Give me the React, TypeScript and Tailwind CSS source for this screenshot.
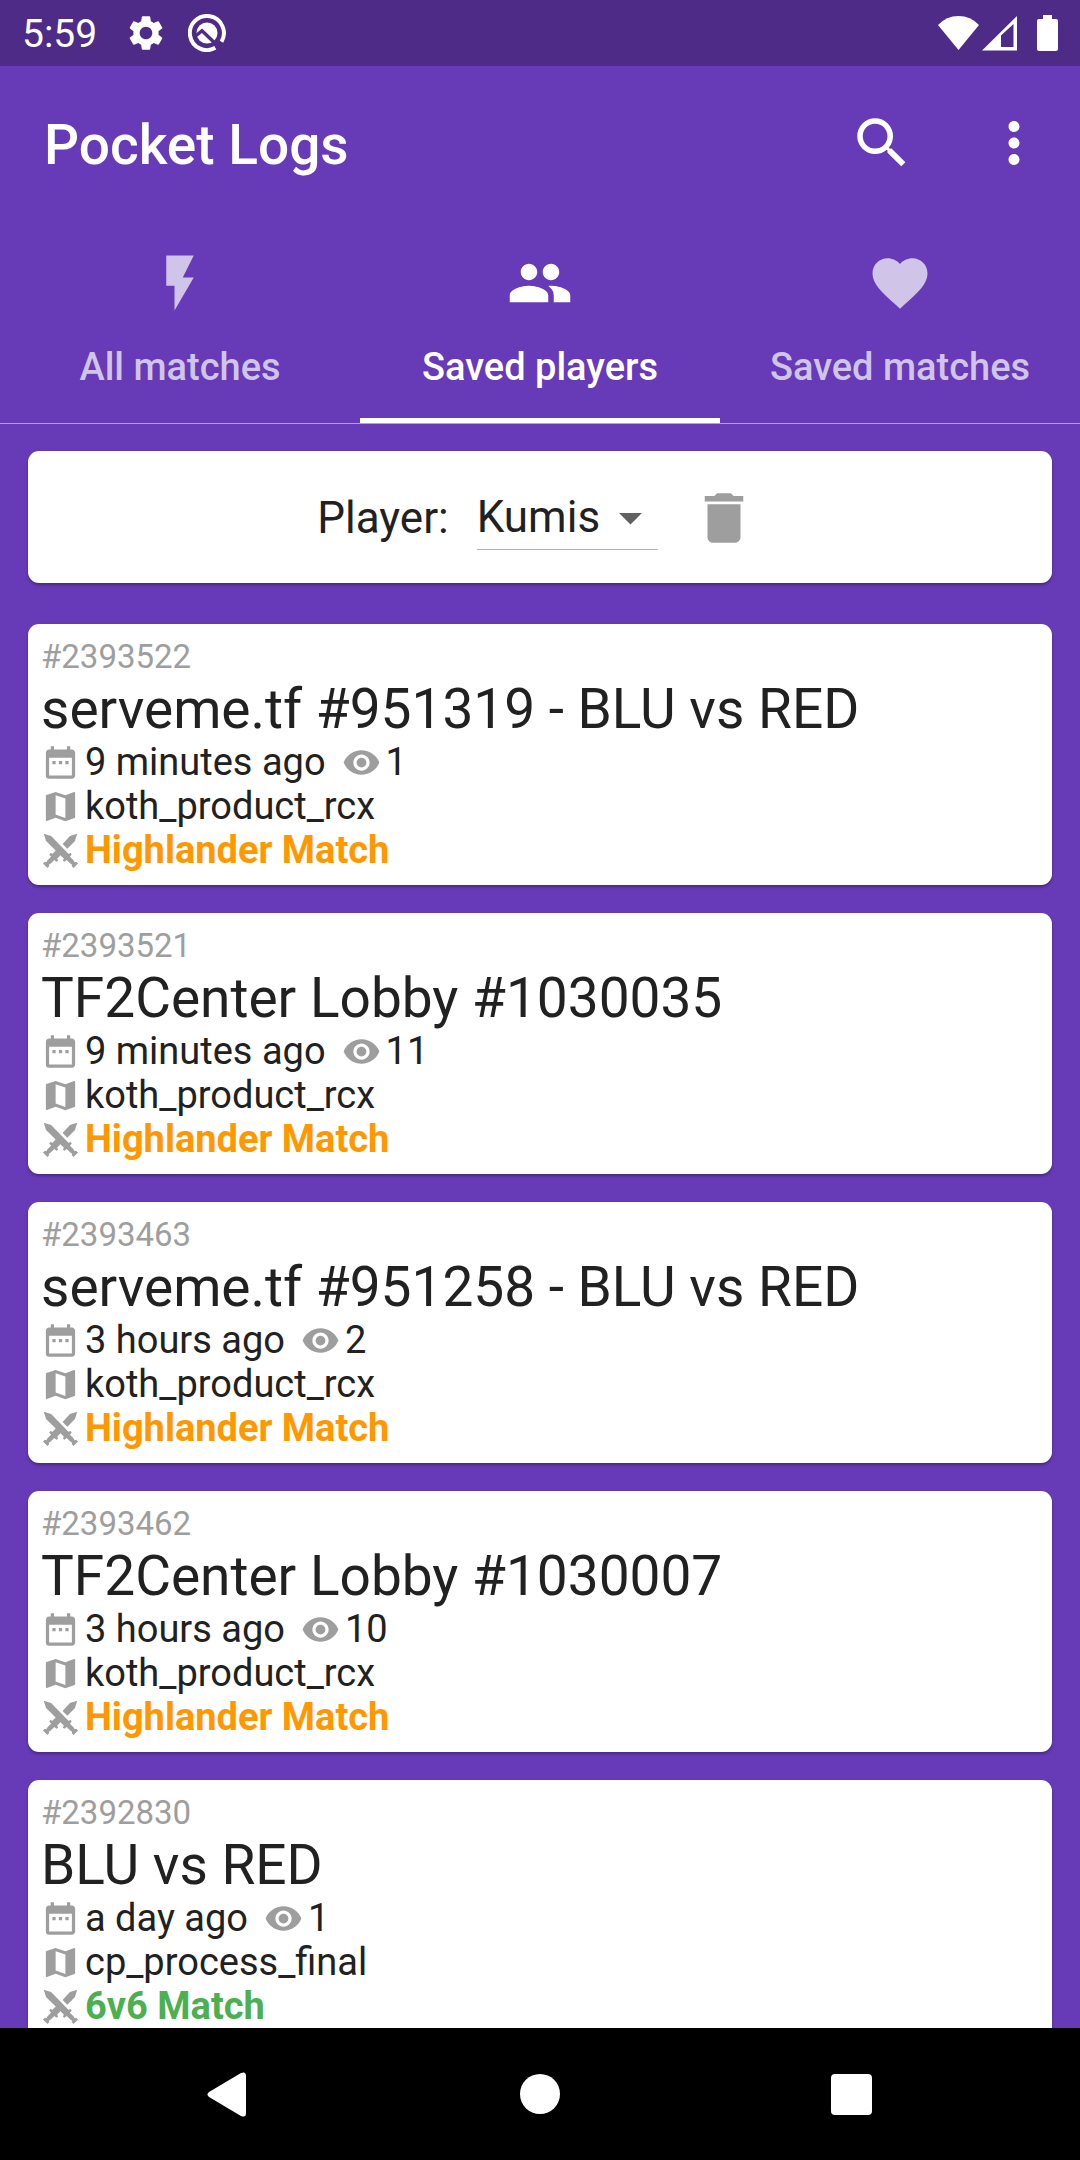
import React from "react";
import {
  MdArrowDropDown,
  MdDateRange,
  MdDelete,
  MdFavorite,
  MdFlashOn,
  MdMap,
  MdMoreVert,
  MdPeople,
  MdRemoveRedEye,
  MdSearch,
  MdSettings,
} from "react-icons/md";

type Match = {
  id: string;
  title: string;
  age: string;
  views: number;
  map: string;
  format: "Highlander Match" | "6v6 Match";
};

const matches: Match[] = [
  { id: "#2393522", title: "serveme.tf #951319 - BLU vs RED", age: "9 minutes ago", views: 1, map: "koth_product_rcx", format: "Highlander Match" },
  { id: "#2393521", title: "TF2Center Lobby #1030035", age: "9 minutes ago", views: 11, map: "koth_product_rcx", format: "Highlander Match" },
  { id: "#2393463", title: "serveme.tf #951258 - BLU vs RED", age: "3 hours ago", views: 2, map: "koth_product_rcx", format: "Highlander Match" },
  { id: "#2393462", title: "TF2Center Lobby #1030007", age: "3 hours ago", views: 10, map: "koth_product_rcx", format: "Highlander Match" },
  { id: "#2392830", title: "BLU vs RED", age: "a day ago", views: 1, map: "cp_process_final", format: "6v6 Match" },
];

const tabs = [
  { label: "All matches", Icon: MdFlashOn, active: false },
  { label: "Saved players", Icon: MdPeople, active: true },
  { label: "Saved matches", Icon: MdFavorite, active: false },
];

function CrossedSwords({ className }: { className: string }) {
  return (
    <svg viewBox="0 0 24 24" className={className} fill="currentColor" aria-hidden="true">
      <path d="M1.700 1.700L6.200 3.100L16.900 14L18.300 13.500L18.900 14.500L17.800 15.800L20 18L20.700 19.200L21.600 18.900L22.800 20L20 22.800L18.900 21.600L19.200 20.700L18 20L15.800 17.800L14.500 18.900L13.500 18.300L14 16.900L3.100 6.200Z" />
      <path d="M22.300 1.700L20.900 6.200L16.200 10.900L13.300 8L17.800 3.100Z" />
      <path d="M10.200 10.700L7.100 14L5.700 13.500L5.100 14.500L6.200 15.800L4 18L3.300 19.200L2.400 18.900L1.200 20L4 22.800L5.100 21.600L4.800 20.700L6 20L8.200 17.800L9.500 18.900L10.500 18.300L10 16.900L13.200 13.700Z" />
    </svg>
  );
}

function StatusBar() {
  return (
    <div className="flex h-[66px] shrink-0 items-center justify-between bg-[#4e2b87] px-[22px] text-white">
      <div className="flex items-center">
        <span className="pt-0.5 text-[39px] leading-[46px]">5:59</span>
        <MdSettings className="ml-7 size-[42px]" />
        <svg viewBox="0 0 38 38" className="ml-[21px] size-[38px]" fill="none" aria-hidden="true">
          <path d="M27.300 33.800A17 17 0 1 1 33.500 27.700" stroke="currentColor" strokeWidth="4" />
          <circle cx="19" cy="19" r="10.500" fill="currentColor" />
          <path d="M7 22.500L14 16.800L32 34" stroke="#4e2b87" strokeWidth="3.400" />
        </svg>
      </div>
      <div className="flex items-center">
        <svg viewBox="0 0 41 36" className="h-9 w-[41px]" fill="currentColor" aria-hidden="true">
          <path d="M0 10Q8.500 1 20.500 1T41 10L20.500 35Z" />
        </svg>
        <svg viewBox="0 0 36 36" className="ml-[3px] size-9" aria-hidden="true">
          <path fill="currentColor" fillRule="evenodd" d="M0 35.500L35 1V35.500ZM19 20.500V32H31.500V9Z" />
        </svg>
        <svg viewBox="0 0 21 36" className="ml-[19px] h-9 w-[21px]" fill="currentColor" aria-hidden="true">
          <path d="M6 0H15V4H19Q21 4 21 6V34Q21 36 19 36H2Q0 36 0 34V6Q0 4 2 4H6Z" />
        </svg>
      </div>
    </div>
  );
}

function AppBar() {
  return (
    <header className="flex h-[154px] shrink-0 items-center pl-11 text-white">
      <h1 className="grow pt-[3px] text-[55px] leading-[64px] font-medium">Pocket Logs</h1>
      <button type="button" aria-label="Search" className="flex size-[132px] items-center justify-center">
        <MdSearch className="size-[66px]" />
      </button>
      <button type="button" aria-label="More options" className="flex size-[132px] items-center justify-center">
        <MdMoreVert className="size-[66px]" />
      </button>
    </header>
  );
}

function TabBar() {
  return (
    <nav role="tablist" className="grid shrink-0 grid-cols-3 border-b border-[#b39ddb]">
      {tabs.map(({ label, Icon, active }) => (
        <button
          key={label}
          type="button"
          role="tab"
          aria-selected={active}
          className={
            active
              ? "flex flex-col items-center gap-7 border-b-[5px] border-white pt-[30px] pb-7 text-white"
              : "flex flex-col items-center gap-7 border-b-[5px] border-transparent pt-[30px] pb-7 text-[#d1c4e9]"
          }
        >
          <Icon className="size-[66px]" />
          <span className="text-[38px] leading-[46px] font-medium whitespace-nowrap">{label}</span>
        </button>
      ))}
    </nav>
  );
}

function PlayerFilter() {
  return (
    <section className="flex h-[132px] shrink-0 items-center justify-center rounded-[11px] bg-white pt-0.5 pr-1.5 text-[44px] leading-[52px] text-[#212121] shadow-[0_2px_3px_rgba(0,0,0,0.3)]">
      <label htmlFor="player">Player:</label>
      <div className="relative ml-7 border-b border-[#b0b0b0] pb-[3px]">
        <select id="player" defaultValue="Kumis" className="h-[60px] w-[181px] appearance-none bg-transparent pt-0.5">
          <option>Kumis</option>
        </select>
        <MdArrowDropDown className="pointer-events-none absolute top-1 right-0 size-[55px] text-[#616161]" />
      </div>
      <button type="button" aria-label="Remove player" className="ml-[33px] text-[#9e9e9e]">
        <MdDelete className="size-[66px]" />
      </button>
    </section>
  );
}

function MatchCard({ match }: { match: Match }) {
  return (
    <article className="shrink-0 rounded-[11px] bg-white px-[13px] pt-[13px] pb-[13px] text-[38px] leading-[44px] text-[#212121] shadow-[0_2px_3px_rgba(0,0,0,0.3)]">
      <p className="text-[33px] leading-[40px] text-[#9e9e9e]">{match.id}</p>
      <h2 className="pt-px text-[55px] leading-[62px]">{match.title}</h2>
      <div className="flex items-center">
        <MdDateRange className="size-[39px] text-[#9e9e9e]" />
        <span className="ml-[5px]">{match.age}</span>
        <MdRemoveRedEye className="ml-4 size-[39px] text-[#9e9e9e]" />
        <span className="ml-[5px]">{match.views}</span>
      </div>
      <div className="flex items-center">
        <MdMap className="size-[39px] text-[#9e9e9e]" />
        <span className="ml-[5px]">{match.map}</span>
      </div>
      <div className="flex items-center font-bold">
        <CrossedSwords className="size-[39px] text-[#9e9e9e]" />
        <span className={match.format === "6v6 Match" ? "ml-[5px] text-[#4caf50]" : "ml-[5px] text-[#ff9800]"}>{match.format}</span>
      </div>
    </article>
  );
}

function NavigationBar() {
  return (
    <div className="flex h-[132px] shrink-0 items-center justify-center gap-[179px] bg-black text-white">
      <button type="button" aria-label="Back" className="flex size-[132px] items-center justify-center">
        <svg viewBox="0 0 45 45" className="size-[45px]" fill="currentColor" aria-hidden="true">
          <path d="M34 1Q39-1 39 4V41Q39 46 34 44L2 25Q-1 22.500 2 20Z" />
        </svg>
      </button>
      <button type="button" aria-label="Home" className="flex size-[132px] items-center justify-center">
        <span className="size-10 rounded-full bg-white" />
      </button>
      <button type="button" aria-label="Recent apps" className="flex size-[132px] items-center justify-center">
        <span className="size-[41px] rounded-[4px] bg-white" />
      </button>
    </div>
  );
}

export default function App() {
  return (
    <div className="flex h-screen flex-col overflow-hidden bg-[#673ab7] font-[Roboto,sans-serif]">
      <StatusBar />
      <AppBar />
      <TabBar />
      <main className="flex min-h-0 grow flex-col overflow-hidden px-7 pt-[27px]">
        <PlayerFilter />
        <div className="mt-[41px] flex flex-col gap-7">
          {matches.map((match) => (
            <MatchCard key={match.id} match={match} />
          ))}
        </div>
      </main>
      <NavigationBar />
    </div>
  );
}
